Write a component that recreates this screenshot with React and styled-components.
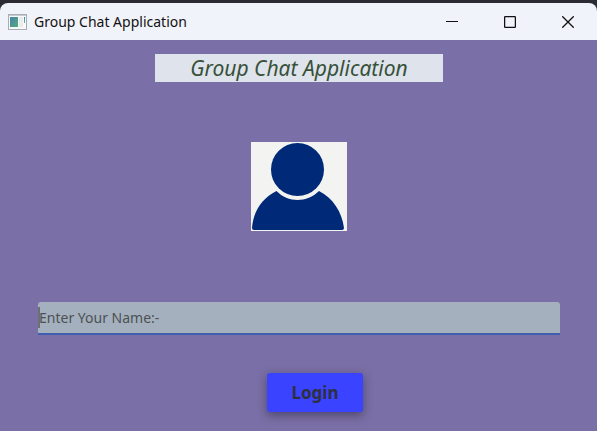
import React from "react";
import styled, { createGlobalStyle } from "styled-components";

const GlobalStyle = createGlobalStyle`
  *, *::before, *::after { box-sizing: border-box; }
  body { margin: 0; background: #2a2b33; }
`;

const Window = styled.div`
  display: flex;
  flex-direction: column;
  min-height: 100vh;
  padding-top: 3px;
  background: #2a2b33;
  font-family: "Noto Sans", sans-serif;
`;

const TitleBar = styled.header`
  display: flex;
  align-items: center;
  height: 37px;
  padding-left: 8px;
  background: #f1f3fa;
  border-radius: 8px 8px 0 0;
`;

const WindowTitle = styled.span`
  flex: 1;
  margin-left: 7px;
  font: 14px/20px "Noto Sans", sans-serif;
  color: #111;
`;

const WindowButton = styled.button`
  display: flex;
  align-items: center;
  justify-content: center;
  width: 58px;
  height: 36px;
  padding: 0;
  border: 0;
  background: none;
`;

const Content = styled.main`
  flex: 1;
  display: flex;
  flex-direction: column;
  align-items: center;
  padding: 14px 37px 19px 38px;
  background: #7a6fa6;
`;

const Heading = styled.h1`
  width: 55%;
  margin: 0;
  background: #dfe3eb;
  color: #37513a;
  font: italic 21px/28px "Comic Sans MS", "Noto Sans", sans-serif;
  text-align: center;
  white-space: nowrap;
`;

const Avatar = styled.svg`
  display: block;
  margin-top: 60px;
`;

const LoginForm = styled.form`
  display: flex;
  flex-direction: column;
  align-items: center;
  width: 100%;
  margin-top: 71px;
`;

const Field = styled.div`
  position: relative;
  width: 100%;

  &::before {
    content: "";
    position: absolute;
    left: 0;
    top: 5px;
    width: 2px;
    height: 21px;
    background: #6c7073;
  }
`;

const NameInput = styled.input`
  display: block;
  width: 100%;
  height: 33px;
  padding: 0 1px;
  border: 0;
  border-bottom: 2px solid #3f5fae;
  border-radius: 3px 3px 0 0;
  outline: none;
  background: #a4b0be;
  color: #333;
  font: 14px/20px "Noto Sans", sans-serif;

  &::placeholder { color: #4c5154; opacity: 1; }
`;

const LoginButton = styled.button`
  width: 96px;
  height: 39px;
  margin: 38px 0 0 32px;
  padding: 0;
  border: 0;
  border-radius: 3px;
  background: #3a43ff;
  color: #2e3040;
  font: bold 17px/24px "Noto Sans", sans-serif;
  box-shadow: 0 3px 10px rgba(45, 40, 65, 0.6);
`;

function AppIcon() {
  return (
    <svg width="19" height="16" viewBox="0 0 19 16" aria-hidden="true">
      <defs>
        <linearGradient id="pane" x1="0" y1="0" x2="1" y2="1">
          <stop offset="0" stopColor="#4a80a8" />
          <stop offset="1" stopColor="#4fae7c" />
        </linearGradient>
        <linearGradient id="bar" x1="0" y1="0" x2="0" y2="1">
          <stop offset="0" stopColor="#3f78c4" />
          <stop offset="1" stopColor="#62c08c" />
        </linearGradient>
      </defs>
      <rect x="0.5" y="0.5" width="18" height="15" fill="#f7f8f8" stroke="#a9adb3" />
      <path d="M1 1.5h17" stroke="#c7cbd0" />
      <rect x="2" y="3" width="8" height="10" fill="url(#pane)" />
      <rect x="11" y="3" width="4" height="10" fill="#e9eceb" />
      <rect x="16" y="3" width="1" height="6" fill="url(#bar)" />
    </svg>
  );
}

export default function App() {
  return (
    <Window>
      <GlobalStyle />
      <TitleBar>
        <AppIcon />
        <WindowTitle>Group Chat Application</WindowTitle>
        <WindowButton type="button" aria-label="Minimize">
          <svg width="12" height="12" viewBox="0 0 12 12">
            <path d="M0 5.5h12" stroke="#111" />
          </svg>
        </WindowButton>
        <WindowButton type="button" aria-label="Maximize">
          <svg width="12" height="12" viewBox="0 0 12 12">
            <rect x="0.6" y="0.6" width="10.8" height="10.8" rx="1" fill="none" stroke="#111" strokeWidth="1.3" />
          </svg>
        </WindowButton>
        <WindowButton type="button" aria-label="Close">
          <svg width="12" height="12" viewBox="0 0 12 12">
            <path d="M0.3 0.3l11.4 11.4M11.7 0.3L0.3 11.7" stroke="#111" strokeWidth="1.3" />
          </svg>
        </WindowButton>
      </TitleBar>
      <Content>
        <Heading>Group Chat Application</Heading>
        <Avatar width="96" height="89" viewBox="0 0 96 89" role="img" aria-label="User">
          <rect width="96" height="89" fill="#f3f3f2" />
          <circle cx="46.5" cy="27.5" r="26.5" fill="#002a78" />
          <path
            d="M25.5 49C11 56 2 70 1 86Q1 88 3 88H91Q93 88 93 86C91 70 82 56 68 49C56 61 37 61 25.5 49Z"
            fill="#002a78"
          />
        </Avatar>
        <LoginForm onSubmit={(event) => event.preventDefault()}>
          <Field>
            <NameInput type="text" aria-label="Enter Your Name" placeholder="Enter Your Name:-" />
          </Field>
          <LoginButton type="submit">Login</LoginButton>
        </LoginForm>
      </Content>
    </Window>
  );
}
